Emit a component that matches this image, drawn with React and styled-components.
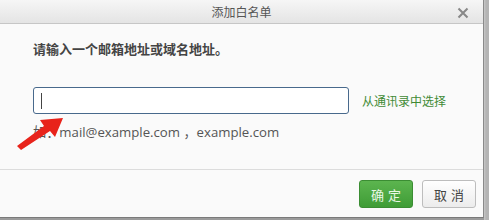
import React from "react";
import styled, { createGlobalStyle } from "styled-components";

const Global = createGlobalStyle`
  body {
    margin: 0;
    background: #9a9a9a;
    font-family: "Noto Sans CJK SC", "Open Sans", sans-serif;
  }
`;

const Page = styled.div`
  width: 489px;
  height: 220px;
  background: linear-gradient(to right, transparent 484px, #c8c8c8 484px, #b4b4b4 486px);
`;

const Dialog = styled.div`
  position: relative;
  width: 483px;
  height: 217px;
  background: #fafafa;
  border-right: 1px solid #8a8a8a;
  border-bottom: 1px solid #7a7a7a;
  display: flex;
  flex-direction: column;
`;

const TitleBar = styled.div`
  height: 23px;
  background: linear-gradient(#f6f6f6, #e4e4e4);
  border-bottom: 1px solid #c6c6c6;
  display: flex;
  align-items: center;
  justify-content: center;
  position: relative;
  font-size: 12px;
  color: #555;
`;

const Close = styled.span`
  position: absolute;
  right: 14px;
  top: 5px;
  width: 12px;
  height: 12px;
`;

const Body = styled.div`
  flex: 1;
  padding: 16px 33px 0;
  border-bottom: 1px solid #dcdcdc;
`;

const Label = styled.div`
  font-size: 13px;
  font-weight: bold;
  color: #444;
  line-height: 18px;
`;

const InputRow = styled.div`
  display: flex;
  align-items: center;
  margin-top: 29px;
  gap: 13px;
`;

const Input = styled.div`
  width: 316px;
  height: 27px;
  box-sizing: border-box;
  border: 1px solid #48698c;
  border-radius: 3px;
  background: #fff;
  display: flex;
  align-items: center;
  padding-left: 7px;
  flex-shrink: 0;
`;

const Caret = styled.span`
  width: 1px;
  height: 16px;
  background: #444;
`;

const Link = styled.span`
  font-size: 12px;
  color: #3f8a35;
  white-space: nowrap;
`;

const Example = styled.div`
  margin-top: 9px;
  font-family: "Open Sans", "Noto Sans CJK SC", sans-serif;
  font-size: 13.2px;
  color: #555;
  line-height: 18px;
`;

const Footer = styled.div`
  height: 46px;
  display: flex;
  justify-content: flex-end;
  align-items: center;
  gap: 9px;
  padding-right: 7px;
  padding-top: 1px;
`;

const Button = styled.button`
  width: 54px;
  height: 28px;
  border-radius: 3px;
  font-family: "Noto Sans CJK SC", sans-serif;
  font-size: 13px;
  letter-spacing: 4px;
  text-indent: 4px;
  padding: 0;
  border: 1px solid ${({ primary }) => (primary ? "#3b8d33" : "#bdbdbd")};
  background: ${({ primary }) =>
    primary
      ? "linear-gradient(#5cb54f, #3f9c36)"
      : "linear-gradient(#ffffff, #ececec)"};
  color: ${({ primary }) => (primary ? "#eaf7e6" : "#444")};
`;

const Arrow = styled.svg`
  position: absolute;
  left: 0;
  top: 0;
  pointer-events: none;
`;

export default function App() {
  return (
    <Page>
      <Global />
      <Dialog>
        <TitleBar>
          添加白名单
          <Close>
            <svg width="12" height="12" viewBox="0 0 12 12">
              <path d="M1.5 1.5 L10.5 10.5 M10.5 1.5 L1.5 10.5" stroke="#888" strokeWidth="2" />
            </svg>
          </Close>
        </TitleBar>
        <Body>
          <Label>请输入一个邮箱地址或域名地址。</Label>
          <InputRow>
            <Input>
              <Caret />
            </Input>
            <Link>从通讯录中选择</Link>
          </InputRow>
          <Example>如：mail@example.com ，example.com</Example>
        </Body>
        <Footer>
          <Button primary>确定</Button>
          <Button>取消</Button>
        </Footer>
        <Arrow width="489" height="220">
          <polygon points="17,146 44,126 40,120 63,118 55,137 50,131 21,150" fill="#e8231b" />
        </Arrow>
      </Dialog>
    </Page>
  );
}
